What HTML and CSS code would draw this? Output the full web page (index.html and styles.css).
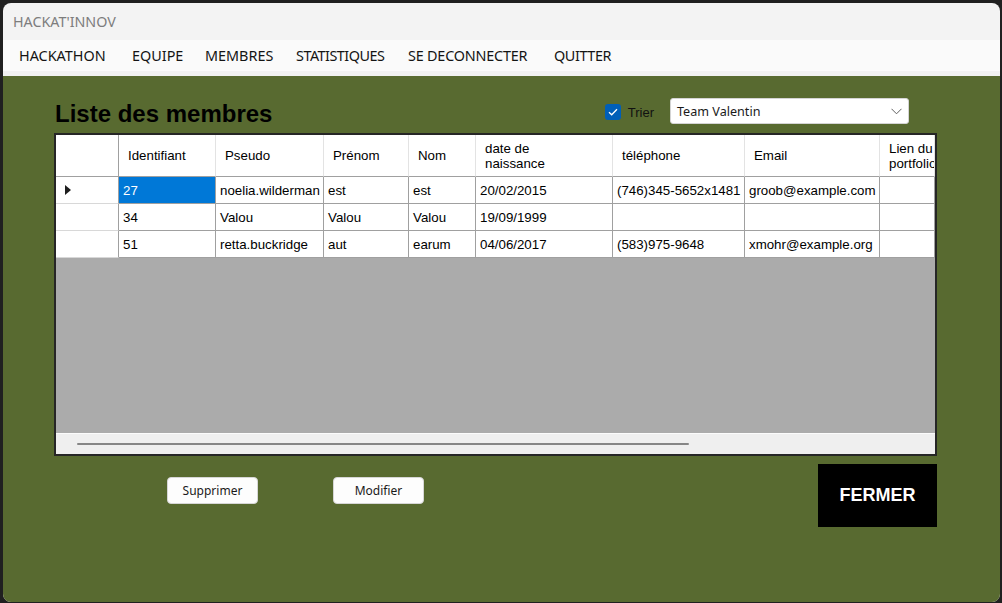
FILE: index.html
```html
<!DOCTYPE html>
<html lang="fr">
<head>
<meta charset="utf-8">
<title>HACKAT'INNOV</title>
<link rel="stylesheet" href="styles.css">
</head>
<body>
<div class="window">
  <div class="titlebar">HACKAT'INNOV</div>
  <nav class="menubar">
    <span class="menu-item menu-hackathon">HACKATHON</span>
    <span class="menu-item menu-equipe">EQUIPE</span>
    <span class="menu-item menu-membres">MEMBRES</span>
    <span class="menu-item menu-stats">STATISTIQUES</span>
    <span class="menu-item menu-logout">SE DECONNECTER</span>
    <span class="menu-item menu-quit">QUITTER</span>
  </nav>
  <main class="panel">
    <div class="panel-head">
      <h1 class="title">Liste des membres</h1>
      <label class="sort">
        <span class="check"><svg width="10" height="8" viewBox="0 0 10 8"><path d="M1 4.2 L3.7 6.8 L9 1.2" fill="none" stroke="#fff" stroke-width="1.3"/></svg></span>
        <span class="sort-label">Trier</span>
      </label>
      <div class="combo">
        <span>Team Valentin</span>
        <svg class="chevron" width="11" height="7" viewBox="0 0 11 7"><path d="M0.5 0.8 L5.5 5.8 L10.5 0.8" fill="none" stroke="#5f5f5f" stroke-width="1"/></svg>
      </div>
    </div>

    <div class="grid">
      <div class="table">
        <div class="hcell corner"></div>
        <div class="hcell">Identifiant</div>
        <div class="hcell">Pseudo</div>
        <div class="hcell">Prénom</div>
        <div class="hcell">Nom</div>
        <div class="hcell">date de<br>naissance</div>
        <div class="hcell">téléphone</div>
        <div class="hcell">Email</div>
        <div class="hcell">Lien du<br>portfolio</div>

        <div class="rhead"><svg width="6" height="10" viewBox="0 0 6 10"><path d="M0 0 L6 5 L0 10 Z" fill="#1e1e1e"/></svg></div>
        <div class="cell selected">27</div>
        <div class="cell">noelia.wilderman</div>
        <div class="cell">est</div>
        <div class="cell">est</div>
        <div class="cell">20/02/2015</div>
        <div class="cell">(746)345-5652x1481</div>
        <div class="cell">groob@example.com</div>
        <div class="cell"></div>

        <div class="rhead"></div>
        <div class="cell">34</div>
        <div class="cell">Valou</div>
        <div class="cell">Valou</div>
        <div class="cell">Valou</div>
        <div class="cell">19/09/1999</div>
        <div class="cell"></div>
        <div class="cell"></div>
        <div class="cell"></div>

        <div class="rhead"></div>
        <div class="cell">51</div>
        <div class="cell">retta.buckridge</div>
        <div class="cell">aut</div>
        <div class="cell">earum</div>
        <div class="cell">04/06/2017</div>
        <div class="cell">(583)975-9648</div>
        <div class="cell">xmohr@example.org</div>
        <div class="cell"></div>
      </div>
      <div class="empty"></div>
      <div class="hscroll"><div class="thumb"></div></div>
    </div>

    <div class="actions">
      <button class="btn btn-delete">Supprimer</button>
      <button class="btn btn-edit">Modifier</button>
      <button class="close">FERMER</button>
    </div>
  </main>
</div>
</body>
</html>
```

FILE: styles.css
```css
* { box-sizing: border-box; }
html, body { margin: 0; padding: 0; }
body {
  background: #202020;
  width: 1002px;
  height: 603px;
  overflow: hidden;
  padding: 3px 2px 1px 3px;
}
.window {
  width: 997px;
  height: 599px;
  border-radius: 8px;
  overflow: hidden;
  background: #f3f3f3;
  display: flex;
  flex-direction: column;
}
.titlebar {
  height: 37px;
  flex: none;
  display: flex;
  align-items: center;
  padding-left: 10px;
  font-family: "Noto Sans", sans-serif;
  font-size: 14.3px;
  color: #7d7d7d;
}
.menubar {
  height: 36px;
  flex: none;
  background: #fafafa;
  border-bottom: 5px solid #f1f1f1;
  display: flex;
  align-items: center;
  padding-left: 16px;
  font-family: "Noto Sans", sans-serif;
  font-size: 14.4px;
  color: #141414;
}
.menu-item { white-space: nowrap; flex: none; }
.menu-hackathon { width: 113px; }
.menu-equipe { width: 73px; }
.menu-membres { width: 91px; }
.menu-stats { width: 112px; letter-spacing: -0.5px; }
.menu-logout { width: 146px; letter-spacing: -0.2px; }
.menu-quit { letter-spacing: -0.4px; }
.panel {
  flex: 1;
  background: #586a30;
  padding: 22px 63px 0 51px;
  display: flex;
  flex-direction: column;
}
.panel-head {
  height: 26px;
  display: flex;
  align-items: center;
}
.title {
  margin: 4px 0 0 1px;
  align-self: flex-start;
  font-family: "Liberation Sans", Arial, sans-serif;
  font-weight: bold;
  font-size: 24px;
  line-height: 24px;
  color: #000;
}
.sort {
  margin-left: auto;
  display: flex;
  align-items: center;
  gap: 7px;
  margin-right: 16px;
  margin-top: 2px;
}
.check {
  width: 16px;
  height: 16px;
  border-radius: 3px;
  background: #005fb8;
  display: flex;
  align-items: center;
  justify-content: center;
}
.sort-label {
  font-family: "Liberation Sans", Arial, sans-serif;
  font-size: 13px;
  color: #111;
}
.combo {
  width: 239px;
  height: 26px;
  margin-right: 28px;
  background: #fff;
  border: 1px solid #d4d4d4;
  border-radius: 3px;
  display: flex;
  align-items: center;
  justify-content: space-between;
  padding: 0 6px 0 6px;
  font-family: "Noto Sans", sans-serif;
  font-size: 12.6px;
  color: #1a1a1a;
}
.chevron { margin-top: 1px; }

.grid {
  margin-top: 9px;
  width: 883px;
  height: 323px;
  border: 2px solid #262626;
  background: #ababab;
  display: flex;
  flex-direction: column;
  overflow: hidden;
}
.table {
  display: grid;
  grid-template-columns: 63px 97px 108px 85px 67px 137px 132px 135px 55px;
  background: #fff;
  font-family: "Liberation Sans", Arial, sans-serif;
  font-size: 13.3px;
  color: #000;
}
.hcell {
  height: 42px;
  border-right: 1px solid #e3e3e3;
  border-bottom: 1px solid #a0a0a0;
  padding-left: 9px;
  display: flex;
  align-items: center;
  line-height: 15px;
  white-space: nowrap;
  overflow: hidden;
}
.hcell.corner { border-right-color: #a0a0a0; }
.cell {
  height: 27px;
  border-right: 1px solid #a0a0a0;
  border-bottom: 1px solid #a0a0a0;
  padding-left: 4px;
  display: flex;
  align-items: center;
  white-space: nowrap;
  overflow: hidden;
}
.cell.selected {
  background: #0078d7;
  color: #fff;
}
.rhead {
  height: 27px;
  border-right: 1px solid #a0a0a0;
  border-bottom: 1px solid #d8d8d8;
  padding-left: 9px;
  display: flex;
  align-items: center;
}
.empty { flex: 1; }
.hscroll {
  height: 21px;
  flex: none;
  background: #efefef;
  border-top: 1px solid #fbfbfb;
  padding: 9px 0 0 21px;
}
.thumb {
  width: 612px;
  height: 2px;
  border-radius: 1px;
  background: #868686;
}

.actions {
  margin-top: 8px;
  display: flex;
  align-items: flex-start;
}
.btn {
  margin-top: 13px;
  width: 91px;
  height: 27px;
  background: #fdfdfd;
  border: 1px solid #d6d6d6;
  border-radius: 4px;
  font-family: "Noto Sans", sans-serif;
  font-size: 12px;
  color: #1a1a1a;
  padding: 0;
}
.btn-delete { margin-left: 113px; }
.btn-edit { margin-left: 75px; }
.close {
  margin-left: auto;
  width: 119px;
  height: 63px;
  background: #000;
  border: none;
  color: #fff;
  font-family: "Liberation Sans", Arial, sans-serif;
  font-weight: bold;
  font-size: 18px;
  padding: 0;
}
```
